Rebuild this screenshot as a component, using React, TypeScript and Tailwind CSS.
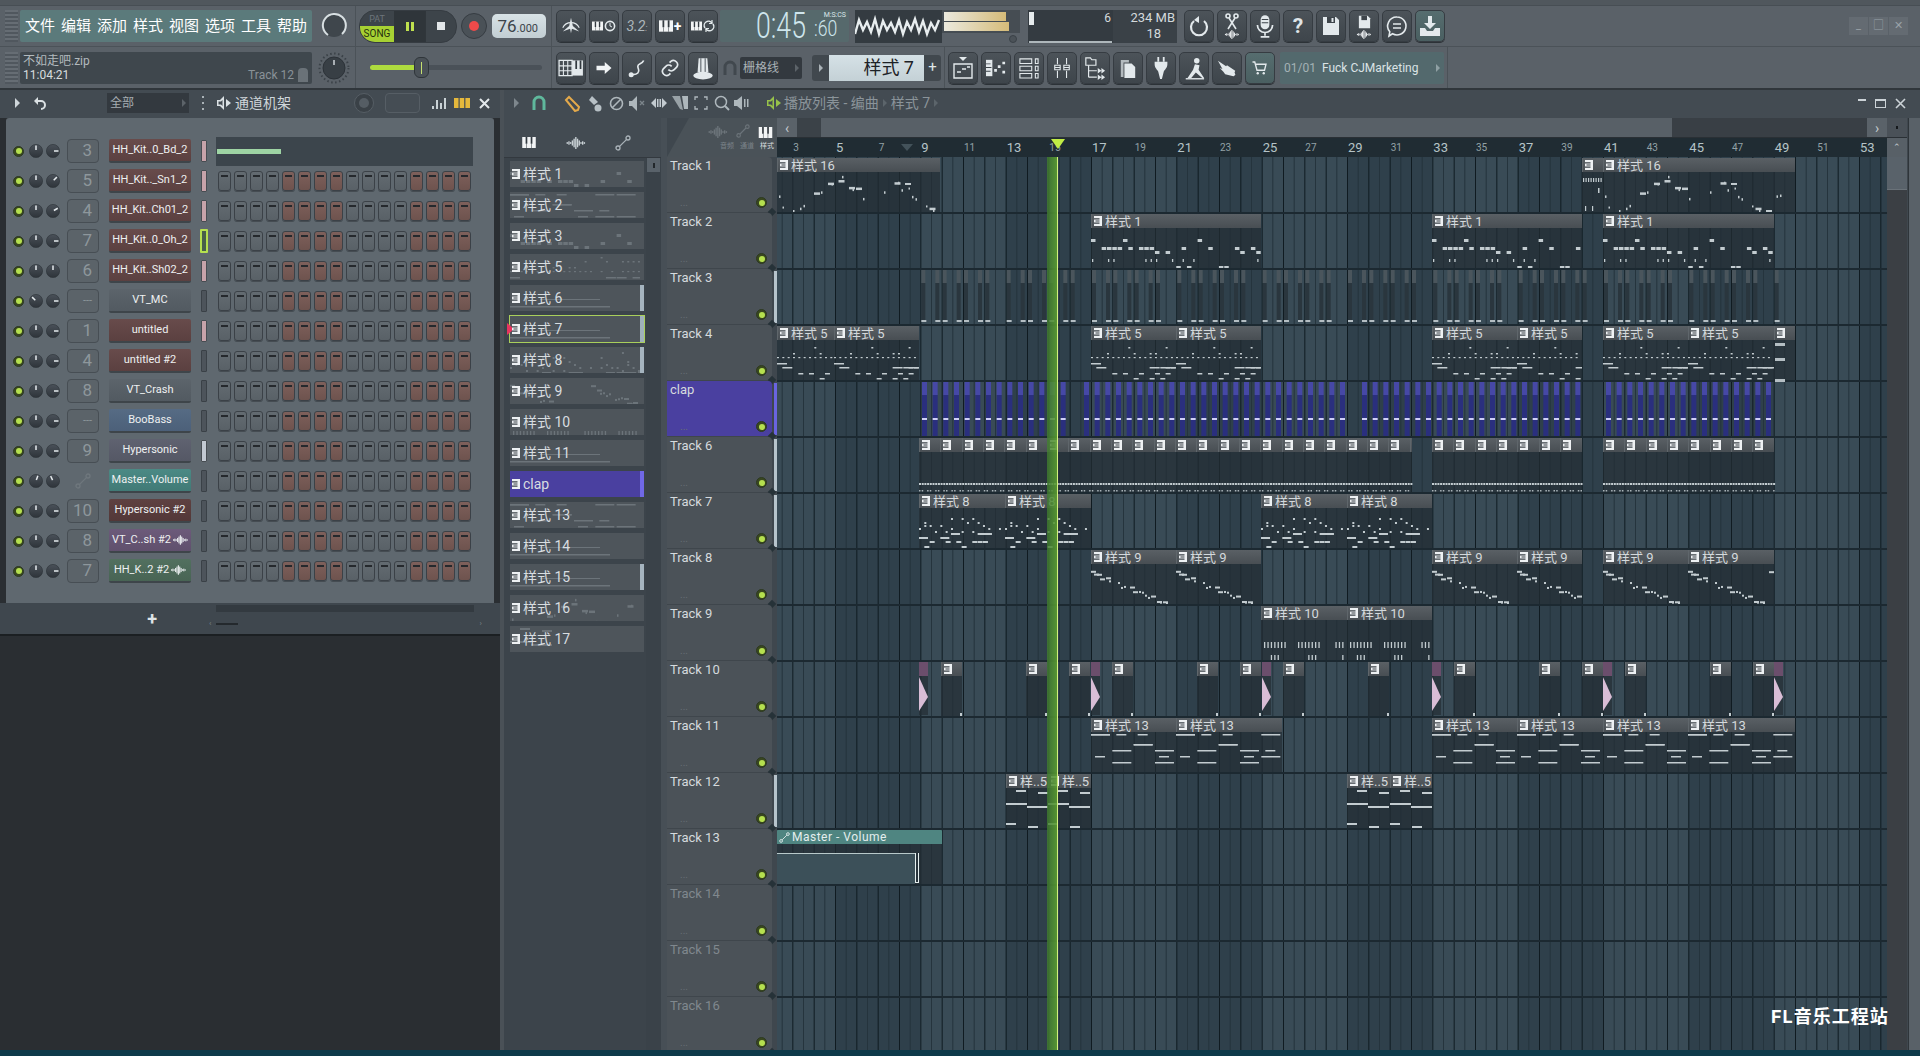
import React from "react";

const BAR = 64 / 3;
const ROW = 56;
const cx = (px: number) => px - 778;
const barX = (b: number) => 1092 + (b - 17) * BAR;

const rng = (seed: number) => {
  let s = seed;
  return () => (s = (s * 9301 + 49297) % 233280) / 233280;
};

type Note = [number, number, number, number];
type Kind = "p16" | "p1" | "p5" | "p8" | "p9" | "p10" | "p13" | "p5b" | "none" | "tick" | "low";

const notesFor = (kind: Kind, w: number): Note[] => {
  const out: Note[] = [];
  const r = rng(kind.length * 37 + kind.charCodeAt(1) * 11);
  if (kind === "p1") {
    const rows = [11, 19, 19, 23, 23, 19, 38];
    for (let x = 0; x < w - 4; x += 5.33) {
      if (r() < 0.8) {
        const y = rows[Math.floor(r() * rows.length)];
        out.push([x, y, 4.5, 3]);
      }
      if (r() < 0.28) out.push([x + 1, 31, 1.3, 3]);
      if (r() < 0.05) out.push([x, 4, 5, 3]);
    }
  } else if (kind === "p5") {
    for (let x = 0; x < w - 2; x += 5.33) {
      if (r() < 0.8) out.push([x, 17, 2, 1.2]);
      if (r() < 0.5) out.push([x, [3, 7, 13][Math.floor(r() * 3)], 2, 1.5]);
      if (r() < 0.55) out.push([x, [23, 27][Math.floor(r() * 2)], 10, 1.5]);
      if (r() < 0.45) out.push([x, [33, 38][Math.floor(r() * 2)], 5, 1.5]);
    }
  } else if (kind === "p8") {
    for (let x = 0; x < w - 2; x += 5.33) {
      if (r() < 0.45) out.push([x, [5, 10, 14][Math.floor(r() * 3)], 2, 2]);
      if (r() < 0.8) out.push([x, 17 + Math.floor(r() * 3) * 3, 2, 2]);
      if (r() < 0.35) out.push([x, [25, 29][Math.floor(r() * 2)], 9, 2]);
      if (r() < 0.35) out.push([x, [33, 38][Math.floor(r() * 2)], 5, 2]);
    }
  } else if (kind === "p9") {
    for (let x = 0; x < w - 4; x += 3) {
      const y = 6 + ((x * 0.42) % 34) + r() * 5;
      if (r() < 0.75) out.push([x, y, r() < 0.5 ? 5 : 2, 2]);
    }
  } else if (kind === "p10") {
    for (let x = 3; x < w - 3; x += 3.4) {
      if (Math.floor(x / 12) % 3 !== 2) out.push([x, 22, 1.3, 6]);
      if (Math.floor(x / 9) % 4 === 1) out.push([x, 35, 1.3, 6]);
    }
  } else if (kind === "p13") {
    const rows = [2, 12, 18, 24, 30];
    for (let x = 0; x < w - 8; x += 21.33) {
      out.push([x, rows[Math.floor(r() * 5)], 19, 1.5]);
      out.push([x, rows[Math.floor(r() * 5)], 19, 1.5]);
      out.push([x + 4, rows[Math.floor(r() * 5)], 10, 1.5]);
    }
  } else if (kind === "p5b") {
    const seq: Note[] = [
      [10, 2, 10, 2],
      [0, 15, 21, 2],
      [32, 4, 10, 2],
      [21, 18, 21, 2],
      [0, 35, 10, 2],
      [22, 38, 10, 2],
    ];
    seq.forEach((n) => out.push(n));
  } else if (kind === "p16") {
    for (let x = 2; x < w - 6; x += 3.5) {
      const y = 20 + Math.sin(x / 11) * 12 + r() * 10 - (x > 60 && x < 100 ? 14 : 0);
      if (r() < 0.42) out.push([x, Math.min(38, y), r() < 0.25 ? 6 : 1.5, r() < 0.25 ? 2 : 2.5]);
    }
  } else if (kind === "tick") {
    for (let x = 1; x < w - 1; x += 2.5) out.push([x, 6, 1.2, 4]);
    out.push([16, 16, 1.5, 5], [3, 34, 1.2, 5], [10, 34, 1.2, 5]);
  } else if (kind === "low") {
    out.push([0, 21, 100, 1.5], [30, 14, 60, 1]);
  }
  return out;
};

const Notes = ({ kind, w, h, color = "#c3ccd0", opacity = 1 }: { kind: Kind; w: number; h: number; color?: string; opacity?: number }) => (
  <svg width={w} height={h} className="block" opacity={opacity}>
    {notesFor(kind, w).map((n, i) => (
      <rect key={i} x={n[0]} y={n[1]} width={n[2]} height={n[3]} fill={color} />
    ))}
  </svg>
);

const PatIcon = ({ color = "#eef1f3" }: { color?: string }) => (
  <svg width="8" height="10" viewBox="0 0 8 10" className="shrink-0">
    <path d="M0 0h8v10H0z" fill={color} />
    <path d="M0 2.2h5.5v1.2H0zM1.5 4.4h4v1.2h-4zM0 6.6h5.5v1.2H0z" fill="#3b4248" />
  </svg>
);

const Wave = ({ w = 22, h = 14, c = "#eef1f3" }: { w?: number; h?: number; c?: string }) => (
  <svg width={w} height={h} viewBox="0 0 22 14">
    {[1, 2, 1, 3, 5, 7, 5, 3, 1, 2, 1].map((v, i) => (
      <rect key={i} x={i * 2} y={7 - v} width="1.6" height={v * 2} fill={c} />
    ))}
  </svg>
);

const Auto = ({ s = 16, c = "#aab3b9" }: { s?: number; c?: string }) => (
  <svg width={s} height={s} viewBox="0 0 16 16" fill="none" stroke={c} strokeWidth="1.3">
    <circle cx="3" cy="13" r="2" />
    <circle cx="13" cy="3" r="2" />
    <path d="M4.6 11.4 11.4 4.6" />
  </svg>
);

const PianoGlyph = ({ w = 16, h = 13 }: { w?: number; h?: number }) => (
  <svg width={w} height={h} viewBox="0 0 16 13">
    <path d="M0 0h16v13H0z" fill="#f2f4f5" />
    <path d="M4 0h2v8H4zM10 0h2v8h-2z" fill="#333a40" />
    <path d="M5 8h.6v5H5zM10.6 8h.6v5h-.6z" fill="#333a40" />
  </svg>
);

const Knob = ({ a, s = 14, rim = "#2c3238" }: { a: number; s?: number; rim?: string }) => (
  <svg width={s} height={s} viewBox="0 0 14 14" className="shrink-0">
    <defs>
      <linearGradient id="kn" x1="0" y1="0" x2="0" y2="1">
        <stop offset="0" stopColor="#4a5159" />
        <stop offset="1" stopColor="#2e343a" />
      </linearGradient>
    </defs>
    <circle cx="7" cy="7" r="6.6" fill="url(#kn)" stroke={rim} strokeWidth=".6" />
    <path d="M7 1.5V6" stroke="#e6ebee" strokeWidth="1.5" transform={`rotate(${a} 7 7)`} />
  </svg>
);

const Led = ({ s = 11 }: { s?: number }) => (
  <span className="flex shrink-0 items-center justify-center rounded-full border border-[#2d3a22] bg-[#39471f]" style={{ width: s, height: s }}>
    <span className="h-[6px] w-[6px] rounded-full bg-[#b5e04f]" />
  </span>
);

const Tool = ({ children, teal }: { children?: React.ReactNode; teal?: boolean }) => (
  <div
    className={`flex h-[32px] w-[30px] shrink-0 items-center justify-center rounded-[5px] border border-[#363c42] shadow-[0_1px_0_#2c3237] ${
      teal ? "bg-linear-to-b from-[#566d6f] to-[#4a5f61]" : "bg-linear-to-b from-[#4c5359] to-[#3e454b]"
    }`}
  >
    {children}
  </div>
);

const Ico = ({ children, s = 22 }: { children: React.ReactNode; s?: number }) => (
  <svg width={s} height={s} viewBox="0 0 24 24" fill="none" stroke="#e3e9ec" strokeWidth="2">
    {children}
  </svg>
);

const W = "#e3e9ec";

const topIcons: React.ReactNode[] = [
  <Ico key="a">
    <path d="M12 3 14 12 21 18 13 15 12 20 11 15 3 18 10 12Z" fill={W} stroke="none" />
    <path d="M3 14a10 10 0 0 1 18 0" strokeWidth="1.2" />
  </Ico>,
  <div key="b" className="flex items-center gap-[1px]">
    <PianoGlyph w={11} h={12} />
    <svg width="12" height="12" viewBox="0 0 12 12" fill="none" stroke={W} strokeWidth="1.6">
      <circle cx="6" cy="6" r="4.6" />
      <path d="M6 3v3l2 1" strokeWidth="1" />
    </svg>
  </div>,
  <span key="c" className="text-[14px] italic text-[#aeb7bc]">3.2<span className="text-[9px]">:</span></span>,
  <div key="d" className="flex items-center gap-[1px]">
    <PianoGlyph w={14} h={12} />
    <span className="text-[14px] font-bold leading-none text-white">+</span>
  </div>,
  <div key="e" className="flex items-center gap-[1px]">
    <PianoGlyph w={11} h={10} />
    <svg width="12" height="14" viewBox="0 0 12 14" fill="none" stroke={W} strokeWidth="1.5">
      <path d="M2 9a4 4 0 0 1 7-5M10 5a4 4 0 0 1-7 5" />
      <path d="M9 1v3.5H6M3 13V9.5h3" strokeWidth="1.2" />
    </svg>
  </div>,
];

const rightIcons: React.ReactNode[] = [
  <Ico key="a" s={24}>
    <path d="M17 7a8 8 0 1 1-10 0" strokeWidth="2.2" />
    <path d="M12 2 7 6l5 3z" fill={W} stroke="none" />
  </Ico>,
  <div key="b" className="flex flex-col items-center">
    <svg width="18" height="17" viewBox="0 0 18 17" fill="none" stroke={W} strokeWidth="1.6">
      <circle cx="5" cy="3" r="2" />
      <circle cx="13" cy="3" r="2" />
      <path d="M6 5l7 11M12 5 5 16" />
    </svg>
    <Wave w={16} h={9} />
  </div>,
  <Ico key="c" s={26}>
    <rect x="8" y="2" width="8" height="13" rx="4" fill={W} stroke="none" />
    <path d="M5 11a7 7 0 0 0 14 0M12 18v3M8 22h8" strokeWidth="1.6" />
    <path d="M9 6h6M9 9h6" stroke="#3e454b" strokeWidth="1" />
  </Ico>,
  <span key="d" className="text-[21px] font-bold leading-none text-[#dfe5e8]">?</span>,
  <Ico key="e" s={24}>
    <path d="M4 3h13l3 3v15H4z" fill={W} stroke="none" />
    <path d="M8 3v6h8V3" fill="#3e454b" stroke="none" />
    <path d="M12.5 4h2v4h-2z" fill={W} stroke="none" />
  </Ico>,
  <div key="f" className="flex flex-col items-center">
    <svg width="15" height="16" viewBox="0 0 24 24">
      <path d="M3 2h14l4 4v16H3z" fill={W} />
      <path d="M7 2v7h9V2" fill="#3e454b" />
    </svg>
    <Wave w={16} h={9} />
  </div>,
  <Ico key="g" s={24}>
    <path d="M12 3a9 9 0 1 1-4.5 16.8L4 22l.8-4.2A9 9 0 0 1 12 3Z" strokeWidth="1.6" />
    <path d="M8 10h8M8 14h8" strokeWidth="1.6" />
  </Ico>,
  <Ico key="h" s={24}>
    <path d="M10 2h4v7h4l-6 6-6-6h4z" fill={W} stroke="none" />
    <path d="M2 14h5l2 3h6l2-3h5v8H2z" fill={W} stroke="none" />
  </Ico>,
];

const row2Icons: React.ReactNode[] = [
  <Ico key="a" s={26}>
    <path d="M1 5h12v14H1z" strokeWidth="1.2" />
    <path d="M1 10h12M1 14.5h12M5 5v14M9 5v14" strokeWidth="1" />
    <path d="M13 5h10v14H13z" fill={W} stroke="none" />
    <path d="M16 5h1.6v8H16zM20 5h1.6v8H20z" fill="#333a40" stroke="none" />
  </Ico>,
  <Ico key="b" s={18}>
    <path d="M2 9h11V4l9 8-9 8v-5H2z" fill="#f1f4f5" stroke="none" />
  </Ico>,
  <Ico key="c" s={20}>
    <path d="M20 3c-2 5-7 3-7 7s3 5 0 8-8 1-10 3" strokeWidth="2" />
    <circle cx="5" cy="20" r="3" fill={W} stroke="none" />
  </Ico>,
  <Ico key="d" s={20}>
    <path d="M10 14a5 5 0 0 0 7 0l3-3a5 5 0 0 0-7-7l-1.5 1.5" />
    <path d="M14 10a5 5 0 0 0-7 0l-3 3a5 5 0 0 0 7 7l1.5-1.5" />
  </Ico>,
  <Ico key="e" s={26}>
    <path d="M8 3h8l1 13H7z" fill={W} stroke="none" />
    <path d="M10 3v13M14 3v13" stroke="#5b6269" strokeWidth="1" />
    <ellipse cx="12" cy="19" rx="9" ry="3.5" fill={W} stroke="none" />
  </Ico>,
];

const row2Right: React.ReactNode[] = [
  <Ico key="a" s={24}>
    <path d="M8 1h8l-4 4z" fill={W} stroke="none" />
    <path d="M3 8h18v14H3z" strokeWidth="1.4" />
    <path d="M6 16h4M11 13h4M16 11h3" strokeWidth="1.6" />
  </Ico>,
  <svg key="b" width="22" height="20" viewBox="0 0 24 22" fill={W}>
    <path d="M1 2h7v18H1z" />
    <path d="M1 6h5v1H1zM1 10h6v1H1zM1 14h5v1H1z" fill="#3e454b" />
    <path d="M10 12h3v3h-3zM14 8h3v3h-3zM19 4h3v3h-3zM19 14h3v3h-3z" />
  </svg>,
  <svg key="c" width="20" height="22" viewBox="0 0 22 24" fill="none" stroke={W} strokeWidth="1.2">
    <path d="M1 2h13v5H1zM1 10h13v5H1zM1 18h13v5H1z" />
    <path d="M18 2h3v5h-3zM18 10h3v5h-3zM18 18h3v5h-3z" />
  </svg>,
  <svg key="d" width="20" height="22" viewBox="0 0 22 24" fill="none" stroke={W} strokeWidth="1.2">
    <path d="M6 1v7M6 15v8M16 1v7M16 15v8" />
    <path d="M3 9h6v5H3zM13 9h6v5h-6z" />
    <path d="M3 11.5h6M13 11.5h6" />
  </svg>,
  <svg key="e" width="22" height="24" viewBox="0 0 24 26" fill="none" stroke={W} strokeWidth="1.3">
    <path d="M2 2h5l1.500 2H13v6H2z" />
    <path d="M5 10v13M5 16h9M5 23h9" />
    <path d="M15 13l4 3-4 3zM15 20l4 3-4 3zM19 13l4 3-4 3zM19 20l4 3-4 3z" fill={W} stroke="none" />
  </svg>,
  <svg key="f" width="18" height="22" viewBox="0 0 20 24" fill={W}>
    <path d="M2 3h9v3H5v16H2z" opacity=".7" />
    <path d="M6 7h8l4 4v12H6z" />
  </svg>,
  <svg key="g" width="20" height="24" viewBox="0 0 22 26" fill={W}>
    <path d="M7 1h2v5H7zM13 1h2v5h-2z" />
    <path d="M4 6h14v3c0 4-3 6-4 8l-2 8h-2l-2-8c-1-2-4-4-4-8z" />
  </svg>,
  <svg key="h" width="22" height="24" viewBox="0 0 24 26" fill={W}>
    <circle cx="15" cy="5" r="3" />
    <path d="M13 9l-2 6-6 9h4l5-6 7 6h2l-6-9 1-5z" />
    <path d="M3 24h20v1.500H3z" />
  </svg>,
  <svg key="i" width="22" height="20" viewBox="0 0 24 22" fill={W}>
    <path d="M2 3l9 6 1-1 9 6-2 6-9-2-2-3-4-4 3 1z" />
    <circle cx="19" cy="18" r="2" />
  </svg>,
  <Ico key="j" s={18}>
    <path d="M2 4h3l3 11h10l2-8H6" strokeWidth="1.8" />
    <circle cx="9" cy="19" r="1.6" fill={W} stroke="none" />
    <circle cx="17" cy="19" r="1.6" fill={W} stroke="none" />
  </Ico>,
];

const Grip = () => (
  <div className="h-[32px] w-[13px] shrink-0 bg-[repeating-linear-gradient(0deg,#50575e_0,#50575e_2px,#666d74_2px,#666d74_4px)]" />
);

const wavePath = Array.from({ length: 22 }, (_, i) => `${i * 4},${i % 2 ? 9 + (i % 5) : 24 - (i % 3) * 2}`).join(" ");

const Toolbar = () => (
  <div className="h-[90px] shrink-0 border-b-2 border-[#30363b] bg-[#5a6168]">
    <div className="h-[6px] border-b border-[#474e54] bg-[#50575d]" />
    <div className="flex h-[41px] items-center border-b border-[#4b5258] pl-[5px]">
      <Grip />
      <div className="ml-[2px] flex h-[32px] w-[292px] items-center justify-between rounded-[2px] bg-[#5b7a7b] px-[5px] text-[15px] text-white">
        {["文件", "编辑", "添加", "样式", "视图", "选项", "工具", "帮助"].map((t) => (
          <span key={t}>{t}</span>
        ))}
      </div>
      <div className="flex w-[43px] justify-center">
        <svg width="28" height="28" viewBox="0 0 28 28" fill="none">
          <circle cx="14" cy="14" r="11" fill="#3f464c" />
          <path d="M8 23A11.500 11.500 0 1 1 22 22" stroke="#d8dfe2" strokeWidth="2" />
        </svg>
      </div>
      <div className="flex h-[41px] items-center border-l border-[#4b5258] pl-[3px]">
        <div className="flex h-[33px] w-[98px] overflow-hidden rounded-[16px] border border-[#363c42] bg-[#3d444a]">
          <div className="flex w-[34px] flex-col items-center justify-between">
            <span className="pt-[2px] text-[9px] leading-[12px] text-[#6d757b]">PAT</span>
            <span className="w-full bg-[#a7d133] py-[1px] text-center text-[10px] leading-[14px] text-[#24300f]">SONG</span>
          </div>
          <div className="flex w-[31px] items-center justify-center gap-[2px] bg-[#2f353a]">
            <span className="h-[9px] w-[3px] bg-[#bfe04e]" />
            <span className="h-[9px] w-[3px] bg-[#bfe04e]" />
          </div>
          <div className="flex flex-1 items-center justify-center border-l border-[#30363b]">
            <span className="h-[8px] w-[8px] bg-[#e3e7e9]" />
          </div>
        </div>
        <div className="ml-[4px] flex h-[26px] w-[26px] items-center justify-center rounded-full border border-[#363c42] bg-[#4a5157]">
          <span className="h-[10px] w-[10px] rounded-full bg-[#ee4a4a]" />
        </div>
        <div className="ml-[5px] flex h-[24px] w-[54px] items-baseline justify-end rounded-[5px] bg-linear-to-b from-[#d8e2e6] to-[#c2ced3] pr-[8px] pt-[2px] text-[#3c444a]">
          <span className="text-[17px] leading-[20px]">76</span>
          <span className="text-[11px]">.000</span>
        </div>
      </div>
      <div className="ml-[5px] flex h-[41px] items-center gap-[3px] border-l border-[#4b5258] pl-[4px]">
        {topIcons.map((ic, i) => (
          <Tool key={i}>{ic}</Tool>
        ))}
      </div>
      <div className="relative ml-[2px] flex h-[32px] w-[129px] items-end rounded-[2px] bg-[#56696c] pl-[36px] text-[#cfe6ec]">
        <span className="block w-[52px] origin-left scale-x-[0.74] whitespace-nowrap text-[36px] font-light leading-[32px]">0:45</span>
        <span className="ml-[6px] block w-[24px] origin-left scale-x-[0.8] whitespace-nowrap text-[22px] font-light leading-[26px]">:60</span>
        <span className="absolute right-[3px] top-[1px] text-[7px] leading-[8px] text-[#d9e6e8]">M:S:CS</span>
      </div>
      <div className="ml-[6px] h-[33px] w-[87px] overflow-hidden bg-[#343b41]">
        <svg width="87" height="33">
          <polyline points={wavePath} fill="none" stroke="#e8edef" strokeWidth="2.4" />
        </svg>
      </div>
      <div className="h-[33px] w-[78px]">
        <div className="h-[23px] bg-[#464d53] p-[2px]">
          <div className="h-[9px] w-[62px] bg-linear-to-r from-[#ebe9dd] to-[#d5bb78]" />
          <div className="mt-[1px] h-[9px] w-[65px] bg-linear-to-r from-[#ebe9dd] to-[#d5bb78]" />
        </div>
        <div className="flex justify-end pr-[3px] pt-[2px]">
          <span className="h-[8px] w-[8px] rounded-full border border-[#3a4147] bg-[#4b5258]" />
        </div>
      </div>
      <div className="ml-[8px] flex h-[33px] w-[149px] bg-[#3a4147] text-[#d3d9dc]">
        <div className="relative w-[85px] bg-[#343b41]">
          <div className="absolute left-[1px] top-[2px] h-[13px] w-[5px] bg-[#e6ebed]" />
          <span className="absolute right-[2px] top-0 text-[12px] leading-[17px]">6</span>
          <div className="absolute bottom-0 left-[1px] h-[2px] w-[83px] bg-[#aeb7bb]" />
        </div>
        <div className="flex flex-1 flex-col items-end pr-[2px] text-[13px] leading-[16px]">
          <span>234 MB</span>
          <span className="pr-[14px]">18</span>
        </div>
      </div>
      <div className="ml-[7px] flex h-[41px] items-center gap-[3px]">
        {rightIcons.map((ic, i) => (
          <Tool key={i} teal={i === 7}>
            {ic}
          </Tool>
        ))}
      </div>
      <div className="flex-1" />
      <div className="mr-[12px] flex h-[18px] gap-[1px]">
        {["_", "□", "✕"].map((t) => (
          <span key={t} className="flex w-[19px] items-center justify-center bg-[#646b72] text-[11px] text-[#9aa2a8]">
            {t}
          </span>
        ))}
      </div>
    </div>
    <div className="flex h-[41px] items-center pl-[5px]">
      <Grip />
      <div className="ml-[2px] h-[32px] w-[292px] rounded-[2px] bg-[#3f474d] px-[3px] text-[12px] leading-[14px] text-[#d7dcde]">
        <div className="pt-[2px] text-[#b3babe]">不如走吧.zip</div>
        <div className="flex items-center justify-between">
          <span>11:04:21</span>
          <span className="flex items-center gap-[4px] pr-[1px] text-[#8a9298]">
            Track 12
            <span className="h-[14px] w-[10px] rounded-t-[4px] bg-[#6a7278]" />
          </span>
        </div>
      </div>
      <div className="flex w-[43px] justify-center">
        <svg width="32" height="32" viewBox="0 0 32 32">
          <circle cx="16" cy="16" r="14.500" fill="none" stroke="#3b4248" strokeWidth="2" strokeDasharray="1.500 2.500" />
          <circle cx="16" cy="16" r="11" fill="#383f45" stroke="#2c3238" />
          <path d="M16 8v5" stroke="#cfd6da" strokeWidth="1.500" />
        </svg>
      </div>
      <div className="flex h-[41px] w-[196px] items-center border-l border-[#4b5258] pl-[14px]">
        <div className="relative h-[5px] w-[172px] rounded-full bg-[#4a5158]">
          <div className="h-[5px] w-[51px] rounded-l-full bg-[#aedb3f]" />
          <div className="absolute left-[44px] top-[-8px] flex h-[21px] w-[15px] items-center justify-center rounded-[6px] border border-[#2f353a] bg-[#4a5157]">
            <span className="h-[12px] w-[1px] bg-[#c5e070]" />
          </div>
        </div>
      </div>
      <div className="flex h-[41px] items-center gap-[3px] border-l border-[#4b5258] pl-[4px]">
        {row2Icons.map((ic, i) => (
          <Tool key={i}>{ic}</Tool>
        ))}
      </div>
      <svg width="14" height="16" viewBox="0 0 14 16" className="ml-[5px] shrink-0" fill="none" stroke="#41484e" strokeWidth="3">
        <path d="M2 15V7a5 5 0 0 1 10 0v8" />
      </svg>
      <div className="ml-[3px] flex h-[22px] w-[62px] items-center justify-between rounded-[2px] bg-[#33393f] px-[3px] text-[12px] text-[#a9b1b6]">
        栅格线
        <span className="h-0 w-0 border-y-[4px] border-l-[4px] border-y-transparent border-l-[#5c6369]" />
      </div>
      <div className="ml-[10px] flex h-[26px]">
        <div className="flex w-[17px] items-center justify-center rounded-l-[3px] bg-[#41484e]">
          <span className="h-0 w-0 border-y-[4px] border-l-[4px] border-y-transparent border-l-[#aab2b7]" />
        </div>
        <div className="flex w-[95px] items-center justify-end bg-linear-to-b from-[#d5e1e6] to-[#c4d1d6] pr-[10px] text-[18px] text-[#1d2226]">
          样式 7
        </div>
        <div className="flex w-[17px] items-center justify-center rounded-r-[3px] bg-[#41484e] text-[15px] text-[#dfe5e8]">+</div>
      </div>
      <div className="ml-[3px] flex h-[41px] items-center gap-[3px] border-l border-[#4b5258] pl-[3px]">
        {row2Right.map((ic, i) => (
          <Tool key={i} teal={i === 9}>
            {ic}
          </Tool>
        ))}
      </div>
      <div className="ml-[5px] flex h-[32px] w-[164px] items-center rounded-[2px] bg-[#53696d] px-[4px] text-[12px] text-[#dbe3e5]">
        <span className="text-[#a4b2b5]">01/01</span>
        <span className="ml-[6px] flex-1">Fuck CJMarketing</span>
        <span className="h-0 w-0 border-y-[4px] border-l-[4px] border-y-transparent border-l-[#8fa0a4]" />
      </div>
      <div className="ml-[3px] h-[41px] flex-1 border-l border-[#4b5258]" />
    </div>
  </div>
);

type Channel = { num?: string; name: string; color: string; sel: string; ctrl?: boolean; wave?: boolean; p: number; v: number };

const RED = "from-[#684b4b] to-[#5b4040]";
const GRAY = "from-[#5c646b] to-[#525a61]";
const channels: Channel[] = [
  { num: "3", name: "HH_Kit..0_Bd_2", color: RED, sel: "pink", p: 0, v: 90 },
  { num: "5", name: "HH_Kit.._Sn1_2", color: RED, sel: "pink", p: 0, v: 45 },
  { num: "4", name: "HH_Kit..Ch01_2", color: RED, sel: "pink", p: 0, v: 60 },
  { num: "7", name: "HH_Kit..0_Oh_2", color: RED, sel: "on", p: 0, v: 90 },
  { num: "6", name: "HH_Kit..Sh02_2", color: RED, sel: "pink", p: 0, v: 0 },
  { num: "---", name: "VT_MC", color: GRAY, sel: "off", p: -45, v: 90 },
  { num: "1", name: "untitled", color: RED, sel: "pink", p: 0, v: 90 },
  { num: "4", name: "untitled #2", color: RED, sel: "off", p: 0, v: 90 },
  { num: "8", name: "VT_Crash", color: GRAY, sel: "off", p: 0, v: 90 },
  { num: "---", name: "BooBass", color: "from-[#566b84] to-[#4c6079]", sel: "off", p: 0, v: 90 },
  { num: "9", name: "Hypersonic", color: "from-[#5f6270] to-[#555865]", sel: "light", p: 0, v: 90 },
  { name: "Master..Volume", color: "from-[#4b8a85] to-[#417a76]", sel: "off", ctrl: true, p: 20, v: -25 },
  { num: "10", name: "Hypersonic #2", color: "from-[#5e4141] to-[#533838]", sel: "off", p: 0, v: 90 },
  { num: "8", name: "VT_C..sh #2", color: "from-[#6c5a7a] to-[#60506d]", sel: "off", wave: true, p: 0, v: 90 },
  { num: "7", name: "HH_K..2 #2", color: "from-[#52705f] to-[#486454]", sel: "off", wave: true, p: 0, v: 90 },
];

const selClass: Record<string, string> = {
  pink: "bg-[#c7a3aa] border-[#474d52]",
  off: "bg-[#4d545b] border-[#3a4147]",
  on: "bg-[#48604a] border-[#b5e04f] border-2 w-[8px] h-[24px]",
  light: "bg-[#c2c9d2] border-[#474d52]",
};

const Step = ({ alt }: { alt: boolean }) => (
  <div
    className={`flex h-[20px] w-[13px] justify-center rounded-[3px] border border-[#3b4147] pt-[3px] shadow-[0_1px_0_#454c52] ${
      alt ? "bg-linear-to-b from-[#7e605b] to-[#6e534e]" : "bg-linear-to-b from-[#636b71] to-[#596167]"
    }`}
  >
    <span className="h-[2px] w-[7px] bg-[#25292d]" />
  </div>
);

const ChannelRow = ({ c, index }: { c: Channel; index: number }) => (
  <div className="flex h-[30px] items-center">
    <div className="ml-[13px] flex w-[11px] justify-center">
      <Led />
    </div>
    <div className="ml-[5px] flex w-[31px] items-center gap-[3px]">
      <Knob a={c.p} />
      <Knob a={c.v} />
    </div>
    <div className="ml-[7px] w-[32px]">
      {c.ctrl ? (
        <div className="flex justify-center">
          <Auto s={16} c="#6f777d" />
        </div>
      ) : (
        <div className="flex h-[24px] items-center justify-end rounded-[4px] border border-[#474e54] bg-[#5b6369] pr-[6px] text-[17px] text-[#8e979c]">
          <span className={c.num === "---" ? "text-[11px]" : ""}>{c.num}</span>
        </div>
      )}
    </div>
    <div
      className={`ml-[10px] flex h-[24px] w-[82px] items-center justify-center gap-[2px] rounded-[2px] border-b-2 border-[#3e454a] bg-linear-to-b ${c.color} whitespace-nowrap text-[11px] text-[#eef0f1]`}
    >
      <span>{c.name}</span>
      {c.wave && <Wave w={15} h={12} />}
    </div>
    <div className="ml-[9px] flex w-[8px] justify-center">
      <div className={`h-[22px] w-[6px] rounded-[1px] border ${selClass[c.sel]}`} />
    </div>
    {index === 0 ? (
      <div className="ml-[8px] flex h-[29px] w-[257px] items-center bg-[#3c454c] pl-[1px]">
        <div className="h-[5px] w-[64px] bg-[#9ed4a4]" />
      </div>
    ) : (
      <div className="ml-[10px] flex gap-[3px]">
        {Array.from({ length: 16 }, (_, i) => (
          <Step key={i} alt={Math.floor(i / 4) % 2 === 1} />
        ))}
      </div>
    )}
  </div>
);

const ChannelRack = () => (
  <div className="flex h-full w-[500px] shrink-0 flex-col bg-[#2a2e32]">
    <div className="flex h-[28px] shrink-0 items-center bg-[#434b52] pb-[2px] text-[#dde3e6]">
      <span className="ml-[15px] h-0 w-0 border-y-[5px] border-l-[5px] border-y-transparent border-l-[#cfd6da]" />
      <svg width="14" height="14" viewBox="0 0 14 14" className="ml-[13px]" fill="none" stroke="#dbe1e4" strokeWidth="2">
        <path d="M4 5h4a4 4 0 0 1 0 8" />
        <path d="M1 5l4-4v8z" fill="#dbe1e4" stroke="none" />
      </svg>
      <div className="ml-[60px] flex h-[20px] w-[82px] items-center justify-between bg-[#33393f] px-[3px] text-[12px] text-[#a5adb2]">
        全部
        <span className="h-0 w-0 border-y-[4px] border-l-[4px] border-y-transparent border-l-[#5c6369]" />
      </div>
      <div className="ml-[13px] flex h-[14px] w-[2px] flex-col justify-between">
        <span className="h-[2px] w-[2px] bg-[#aab2b7]" />
        <span className="h-[2px] w-[2px] bg-[#aab2b7]" />
        <span className="h-[2px] w-[2px] bg-[#aab2b7]" />
      </div>
      <svg width="16" height="16" viewBox="0 0 16 16" className="ml-[12px]" fill="#dbe1e4">
        <path d="M1 5h3l4-4v14l-4-4H1zM2.500 6.500v3H5l1.500 1.500v-6L5 6.500z" fillRule="evenodd" />
        <path d="M10 4l5 4-5 4z" />
      </svg>
      <span className="ml-[3px] text-[14px] text-[#cfd6da]">通道机架</span>
      <div className="ml-[63px] flex h-[20px] w-[20px] items-center justify-center rounded-full border border-[#565e65] bg-[#3a4147]">
        <span className="h-[10px] w-[10px] rounded-full bg-[#555d64]" />
      </div>
      <div className="ml-[11px] h-[20px] w-[35px] rounded-[4px] border border-[#565e65] bg-[#454d54]" />
      <svg width="16" height="12" viewBox="0 0 16 12" className="ml-[11px]" fill="#c9d1d5">
        <path d="M1 9h2v3H1zM5 3h2v9H5zM9 6h2v6H9zM13 1h2v11h-2z" />
      </svg>
      <svg width="16" height="10" viewBox="0 0 16 10" className="ml-[7px]" fill="#e5b83c">
        <path d="M0 0h4.500v10H0zM5.700 0h4.500v10H5.700zM11.400 0H16v10h-4.600z" />
      </svg>
      <svg width="11" height="11" viewBox="0 0 11 11" className="ml-[9px]" stroke="#e3e8eb" strokeWidth="2">
        <path d="M1 1l9 9M10 1l-9 9" />
      </svg>
    </div>
    <div className="mx-[6px] h-[485px] shrink-0 rounded-t-[3px] bg-[#5f686f] pt-[18px]">
      <div className="-ml-[6px]">
        {channels.map((c, i) => (
          <ChannelRow key={i} c={c} index={i} />
        ))}
      </div>
    </div>
    <div className="flex h-[31px] shrink-0 bg-[#3f474e]">
      <div className="flex w-[216px] items-center justify-end pr-[59px] text-[18px] font-bold text-[#dfe4e6]">+</div>
      <div className="w-[258px] pt-[2px]">
        <div className="h-[7px] bg-[#333a40]" />
        <div className="flex items-center justify-between pt-[8px]">
          <span className="-ml-[7px] text-[8px] leading-[8px] text-[#7a8288]">‹</span>
          <span className="absolute ml-[0px] h-[2px] w-[22px] bg-[#24292d]" />
          <span className="mr-[-8px] text-[8px] leading-[8px] text-[#7a8288]">›</span>
        </div>
      </div>
    </div>
    <div className="h-[2px] shrink-0 bg-[#1b1f22]" />
    <div className="flex-1 bg-[#2a2e32]" />
  </div>
);

const patterns: { name: string; kind: Kind; bar?: string; sel?: boolean; clap?: boolean }[] = [
  { name: "样式 1", kind: "p1" },
  { name: "样式 2", kind: "p13" },
  { name: "样式 3", kind: "p1" },
  { name: "样式 5", kind: "p5" },
  { name: "样式 6", kind: "low", bar: "#a5b4bf" },
  { name: "样式 7", kind: "low", bar: "#9fb0bb", sel: true },
  { name: "样式 8", kind: "p8", bar: "#a5b4bf" },
  { name: "样式 9", kind: "p9" },
  { name: "样式 10", kind: "p10" },
  { name: "样式 11", kind: "low" },
  { name: "clap", kind: "none", bar: "#7068e6", clap: true },
  { name: "样式 13", kind: "p13" },
  { name: "样式 14", kind: "low" },
  { name: "样式 15", kind: "low", bar: "#a5b4bf" },
  { name: "样式 16", kind: "p16" },
  { name: "样式 17", kind: "p5b" },
];

const Picker = () => (
  <div className="flex w-[157px] shrink-0 flex-col bg-[#434b52]">
    <div className="flex h-[39px] shrink-0 items-center justify-around pl-[2px] pr-[16px] pt-[10px]">
      <PianoGlyph w={16} h={11} />
      <Wave w={20} h={12} c="#c9d1d5" />
      <Auto s={16} />
    </div>
    <div className="flex min-h-0 flex-1 border-t border-[#33393f]">
      <div className="w-[142px] bg-[#3c444b] pl-[6px] pt-[3px]">
        {patterns.map((p) => (
          <div
            key={p.name}
            className={`relative mb-[5px] flex h-[26px] w-[134px] items-center ${p.clap ? "bg-[#4a40a0]" : "bg-[#4e555b]"} ${
              p.sel ? "outline-1 outline-[#a9cf5b]" : ""
            }`}
          >
            <div className="absolute left-0 top-0">
              <Notes kind={p.kind} w={130} h={26} color="#808a90" opacity={0.6} />
            </div>
            {p.sel && <span className="absolute left-[-3px] top-[7px] h-0 w-0 border-y-[6px] border-l-[7px] border-y-transparent border-l-[#e8345f]" />}
            <div className="relative flex flex-1 items-center gap-[3px] pl-[2px] text-[14px] leading-none text-[#d8dde0]">
              <PatIcon />
              {p.name}
            </div>
            {p.bar && <span className="h-full w-[4px]" style={{ backgroundColor: p.bar }} />}
          </div>
        ))}
      </div>
      <div className="w-[15px] bg-[#3a4249] pl-[1px]">
        <div className="flex h-[14px] w-[13px] items-center justify-center bg-[#59626a]">
          <span className="h-[5px] w-[2px] bg-[#22272b]" />
        </div>
      </div>
    </div>
  </div>
);

const tracks = [1, 2, 3, 4, 5, 6, 7, 8, 9, 10, 11, 12, 13, 14, 15, 16];
const selected = [3, 6, 7, 12];

const TrackHead = ({ n }: { n: number }) => {
  const clap = n === 5;
  return (
    <div className="flex h-[56px] shrink-0">
      <div className={`relative flex w-[105px] flex-col justify-between rounded-r-[4px] border-b border-[#3f464c] pb-[4px] pl-[3px] pr-[5px] pt-[1px] ${clap ? "bg-[#4a40a0]" : "bg-[#4b5258]"}`}>
        <span className={`text-[13px] leading-[16px] ${n > 13 ? "text-[#80888e]" : "text-[#d5dadd]"}`}>{clap ? "clap" : `Track ${n}`}</span>
        <div className="flex items-center justify-between">
          <span className="pl-[10px] text-[10px] leading-[8px] text-[#666e74]">...</span>
          <Led />
        </div>
        <span className="absolute -bottom-[3px] -right-[3px] h-[6px] w-[6px] rotate-45 bg-[#263238]" />
      </div>
      <div className="ml-[2px] w-[3px] py-[2px]">
        {(selected.includes(n) || clap) && <div className={`h-full ${clap ? "bg-[#6a64e0]" : "bg-[#b7c4cc]"}`} />}
      </div>
    </div>
  );
};

const Grid = () => {
  const bands: React.ReactNode[] = [];
  const lines: React.ReactNode[] = [];
  for (let b = 1; b < 58; b += 4) {
    if ((b - 1) % 8 === 4) bands.push(<rect key={b} x={cx(barX(b))} y={0} width={BAR * 4} height={893} fill="#2f404b" />);
  }
  for (let b = 1; b < 58; b += 1) {
    const x = cx(barX(b));
    lines.push(<rect key={`b${b}`} x={x} y={0} width={1} height={893} fill="#101b21" />);
    lines.push(<rect key={`h${b}`} x={x + BAR / 2} y={0} width={1} height={893} fill="#25343d" />);
  }
  return (
    <svg width="1110" height="893" className="absolute left-0 top-0">
      <rect width="1110" height="893" fill="#394b56" />
      {bands}
      {lines}
      {tracks.map((t) => (
        <rect key={t} x="0" y={t * ROW - 1} width="1110" height="2" fill="#1c2931" />
      ))}
    </svg>
  );
};

type ClipT = { x: number; w: number; t: number; label?: string; kind: Kind };
const mk = (t: number, label: string | undefined, kind: Kind, xs: number[]): ClipT[] =>
  xs.slice(0, -1).map((x, i) => ({ x, w: xs[i + 1] - x, t, label, kind }));

const beats = (from: number, to: number) => {
  const a: number[] = [];
  for (let x = from; x < to - 2; x += BAR) a.push(x);
  a.push(to);
  return a;
};

const clips: ClipT[] = [
  ...mk(1, "样式 16", "p16", [778, 941]),
  ...mk(1, undefined, "tick", [1583, 1604]),
  ...mk(1, "样式 16", "p16", [1604, 1796]),
  ...mk(2, "样式 1", "p1", [1092, 1262]),
  ...mk(2, "样式 1", "p1", [1433, 1583]),
  ...mk(2, "样式 1", "p1", [1604, 1775]),
  ...mk(4, "样式 5", "p5", [778, 835, 920]),
  ...mk(4, "样式 5", "p5", [1092, 1177, 1262]),
  ...mk(4, "样式 5", "p5", [1433, 1518, 1583]),
  ...mk(4, "样式 5", "p5", [1604, 1689, 1775]),
  ...mk(4, undefined, "none", [1775, 1796]),
  ...mk(6, undefined, "none", beats(920, 1413)),
  ...mk(6, undefined, "none", beats(1433, 1583)),
  ...mk(6, undefined, "none", beats(1604, 1775)),
  ...mk(7, "样式 8", "p8", [920, 1006, 1092]),
  ...mk(7, "样式 8", "p8", [1262, 1348, 1433]),
  ...mk(8, "样式 9", "p9", [1092, 1177, 1262]),
  ...mk(8, "样式 9", "p9", [1433, 1518, 1583]),
  ...mk(8, "样式 9", "p9", [1604, 1689, 1775]),
  ...mk(9, "样式 10", "p10", [1262, 1348, 1433]),
  ...[942, 1027, 1070, 1113, 1198, 1241, 1284, 1369, 1455, 1540, 1583, 1626, 1711, 1754].map((x) => ({ x, w: 21, t: 10, kind: "none" as Kind })),
  ...mk(11, "样式 13", "p13", [1092, 1177, 1283]),
  ...mk(11, "样式 13", "p13", [1433, 1518, 1604, 1689, 1796]),
  ...mk(12, "样..5", "p5b", [1007, 1049, 1092]),
  ...mk(12, "样..5", "p5b", [1348, 1391, 1433]),
];

const Clip = ({ c }: { c: ClipT }) => (
  <div className="absolute overflow-hidden" style={{ left: cx(c.x), top: (c.t - 1) * ROW + 1, width: c.w, height: ROW - 2 }}>
    <div className="flex h-[14px] items-center gap-[3px] border-l border-[#5f666b] bg-linear-to-b from-[#5a6065] to-[#484e53] pl-[2px] text-[13px] leading-none text-[#d4d9dc]">
      <PatIcon />
      {c.label && <span className="whitespace-nowrap">{c.label}</span>}
    </div>
    <div className="h-[40px] bg-[#232e35]/70">
      <Notes kind={c.kind} w={c.w} h={40} />
    </div>
  </div>
);

const Hits = () => {
  const t3: React.ReactNode[] = [];
  for (let b = 9; b < 50; b += 1) {
    [1, 15].forEach((off, j) => {
      if (j === 1 && (b % 4 === 0 || b === 49)) return;
      const x = cx(barX(b)) + off;
      t3.push(
        <g key={`${b}-${j}`}>
          <rect x={x} y={ROW * 2 + 1} width="4" height="13" fill="#4a555c" />
          <rect x={x} y={ROW * 2 + 14} width="4" height="37" fill="#2a363e" />
          <rect x={x} y={ROW * 2 + 51} width="5" height="2" fill="#b4bec3" />
        </g>,
      );
    });
  }
  const clap: React.ReactNode[] = [];
  const ranges = [
    [923, 1073],
    [1085, 1348],
    [1363, 1583],
    [1607, 1775],
  ];
  ranges.forEach(([a, b]) => {
    for (let x = a; x < b - 3; x += BAR / 2) {
      clap.push(
        <g key={x}>
          <rect x={cx(x)} y={ROW * 4 + 1} width="5" height="13" fill="#4648a6" />
          <rect x={cx(x)} y={ROW * 4 + 14} width="5" height="41" fill="#2a2f7e" />
          <rect x={cx(x)} y={ROW * 4 + 37} width="5" height="2" fill="#cfcff8" />
        </g>,
      );
    }
  });
  const t6: React.ReactNode[] = [];
  [
    [920, 1413],
    [1433, 1583],
    [1604, 1775],
  ].forEach(([a, b]) => {
    for (let x = a; x < b; x += 2.7) {
      t6.push(<rect key={`l${x}`} x={cx(x)} y={ROW * 5 + 46} width="2" height="2" fill="#c3ccd0" />);
      if (Math.floor((x - a) / 2.7) % 3 !== 2) t6.push(<rect key={`m${x}`} x={cx(x)} y={ROW * 5 + 53} width="1.500" height="1.500" fill="#a9b3b8" />);
    }
  });
  const pink = [920, 1092, 1263, 1433, 1604, 1775].map((x) => (
    <g key={x}>
      <rect x={cx(x)} y={ROW * 9 + 1} width="9" height="14" fill="#6b4e6c" />
      <rect x={cx(x)} y={ROW * 9 + 15} width="9" height="39" fill="#232e35" opacity=".7" />
      <path d={`M${cx(x)} ${ROW * 9 + 16}L${cx(x) + 9} ${ROW * 9 + 36}L${cx(x)} ${ROW * 9 + 50}Z`} fill="#d9bdd6" />
    </g>
  ));
  const ends = [961, 1046, 1089, 1132, 1217, 1260, 1303, 1388, 1474, 1559, 1602, 1645, 1730, 1773].map((x) => (
    <rect key={x} x={cx(x)} y={ROW * 9 + 52} width="2" height="3" fill="#c3ccd0" />
  ));
  const t4extra = [
    [3, 10],
    [18, 10],
    [39, 10],
  ].map(([y, w]) => <rect key={y} x={cx(1776)} y={ROW * 3 + 15 + y} width={w} height="3" fill="#b4bec3" />);
  return (
    <svg width="1110" height="893" className="absolute left-0 top-0">
      {t3}
      {clap}
      {t6}
      {pink}
      {ends}
      {t4extra}
    </svg>
  );
};

const Automation = () => (
  <div className="absolute" style={{ left: 0, top: 12 * ROW + 1, width: 165, height: ROW - 2 }}>
    <div className="flex h-[14px] items-center gap-[2px] rounded-t-[1px] bg-[#4f8581] pl-[2px] text-[12px] leading-none tracking-[0.5px] text-[#e4eeee]">
      <Auto s={11} c="#e4eeee" />
      Master - Volume
    </div>
    <div className="flex h-[40px] bg-[#232e35]/70">
      <div className="mt-[9px] h-[31px] w-[138px] border-t border-[#b8c9ca] bg-[#3c5059]" />
      <div className="mt-[9px] h-[30px] w-[4px] border-x border-b border-[#e4eeee]" />
    </div>
  </div>
);

const Arrangement = () => (
  <div className="flex min-w-0 flex-1 flex-col bg-[#3f474e]">
    <div className="flex h-[39px] shrink-0">
      <div className="w-[110px] bg-[#4a5258] pr-[3px] [clip-path:polygon(22px_0,100%_0,100%_100%,0_100%)]">
        <div className="flex h-[21px] items-end justify-end gap-[8px] pr-[1px] pb-[1px]">
          <Wave w={20} h={12} c="#6c747a" />
          <Auto s={14} c="#6c747a" />
          <PianoGlyph w={15} h={11} />
        </div>
        <div className="flex justify-end gap-[6px] pt-[2px] text-[7px] leading-[10px] text-[#7b8389]">
          <span>音频</span>
          <span>通道</span>
          <span className="text-[#d7dcdf]">样式</span>
        </div>
      </div>
      <div className="flex w-[1130px] flex-col">
        <div className="flex h-[20px] shrink-0 border-b border-[#2a3035] bg-[#2e3439]">
          <div className="flex w-[20px] items-center justify-center bg-[#5a6269] text-[14px] leading-none text-[#c3cbd0]">‹</div>
          <div className="w-[24px] bg-[#3b4248]" />
          <div className="w-[851px] bg-[#586067]" />
          <div className="w-[195px] bg-[#393f45]" />
          <div className="flex w-[20px] items-center justify-center bg-[#5a6269] text-[14px] leading-none text-[#c3cbd0]">›</div>
          <div className="flex w-[20px] items-center justify-center bg-[#4a5158]">
            <span className="h-[3px] w-[2px] bg-[#15191c]" />
          </div>
        </div>
        <div className="flex h-[19px]">
          <div className="relative w-[1110px] overflow-hidden bg-[#202c33] text-[#b6c4c8]">
            {Array.from({ length: 26 }, (_, i) => 3 + i * 2).map((b) => (
              <span
                key={b}
                className={`absolute top-0 leading-[19px] ${(b - 1) % 4 === 0 ? "text-[13px]" : "text-[10px] text-[#93a2a7]"}`}
                style={{ left: cx(barX(b)) + 1 }}
              >
                {b}
              </span>
            ))}
            <span className="absolute left-[124px] top-[6px] h-0 w-0 border-x-[6px] border-t-[7px] border-x-transparent border-t-[#43525a]" />
            <span className="absolute left-[274px] top-[1px] h-0 w-0 border-x-[7px] border-t-[10px] border-x-transparent border-t-[#c1ec45]" />
          </div>
          <div className="flex w-[20px] items-center justify-center bg-[#586067] text-[9px] text-[#c3cbd0]">⌃</div>
        </div>
      </div>
    </div>
    <div className="relative flex min-h-0 flex-1 overflow-hidden">
      <div className="w-[110px] shrink-0">
        {tracks.map((n) => (
          <TrackHead key={n} n={n} />
        ))}
      </div>
      <div className="relative h-[893px] w-[1110px] shrink-0 overflow-hidden">
        <Grid />
        {clips.map((c, i) => (
          <Clip key={i} c={c} />
        ))}
        <Hits />
        <Automation />
        <div className="absolute bottom-0 left-[270px] top-0 flex w-[11px]">
          <div className="flex-1 bg-linear-to-r from-[#3f7a2f]/80 to-[#5a9e30]/90" />
          <div className="w-[1px] bg-[#d4f080]" />
        </div>
      </div>
      <div className="w-[20px] shrink-0 bg-[#3b3f44]">
        <div className="h-[33px] border-b border-[#6a7279] bg-[#59626a]" />
      </div>
      <span className="absolute bottom-[24px] left-[1104px] whitespace-nowrap font-['Inter','Noto_Sans_CJK_SC',sans-serif] text-[18px] font-bold leading-none tracking-[1px] text-white">
        FL音乐工程站
      </span>
    </div>
  </div>
);

const Playlist = () => (
  <div className="flex h-full min-w-0 flex-1 flex-col border-l-4 border-[#4a5157] bg-[#434b52]">
    <div className="flex h-[28px] shrink-0 items-center pb-[2px]">
      <span className="ml-[10px] h-0 w-0 border-y-[5px] border-l-[5px] border-y-transparent border-l-[#7e878d]" />
      <svg width="16" height="16" viewBox="0 0 16 16" className="ml-[12px]" fill="none" stroke="#5fb89c" strokeWidth="3">
        <path d="M3 15V7a5 5 0 0 1 10 0v8" />
      </svg>
      <svg width="17" height="17" viewBox="0 0 17 17" className="ml-[17px]" fill="none" stroke="#e3a94b" strokeWidth="2">
        <path d="M2 5l3-3 10 10-1 3-3 1z" />
      </svg>
      <svg width="17" height="17" viewBox="0 0 17 17" className="ml-[5px]" fill="#b7c0c5">
        <path d="M6 1l6 6-4 3-5-5z" />
        <circle cx="12" cy="13" r="3.500" />
      </svg>
      <svg width="15" height="15" viewBox="0 0 15 15" className="ml-[6px]" fill="none" stroke="#aeb7bc" strokeWidth="1.600">
        <circle cx="7.500" cy="7.500" r="6" />
        <path d="M3 12l9-9" />
      </svg>
      <svg width="17" height="15" viewBox="0 0 17 15" className="ml-[5px]" fill="#aeb7bc">
        <path d="M0 5h3l5-5v15l-5-5H0z" />
        <path d="M11 5l4 4M15 5l-4 4" stroke="#7c858b" strokeWidth="1.300" />
      </svg>
      <svg width="16" height="12" viewBox="0 0 16 12" className="ml-[5px]" fill="#c3cbd0">
        <path d="M0 6l5-5v10zM16 6l-5-5v10z" />
        <path d="M6 2h1.500v8H6zM8.500 2H10v8H8.500z" />
      </svg>
      <svg width="17" height="16" viewBox="0 0 17 16" className="ml-[5px]" fill="#aeb7bc">
        <path d="M0 1h8l3 14-3-1z" opacity=".8" />
        <path d="M10 1h6v13h-4z" />
      </svg>
      <svg width="14" height="14" viewBox="0 0 14 14" className="ml-[5px]" fill="none" stroke="#aeb7bc" strokeWidth="1.300">
        <path d="M1 4V1h3M10 1h3v3M13 10v3h-3M4 13H1v-3" />
      </svg>
      <svg width="16" height="16" viewBox="0 0 16 16" className="ml-[6px]" fill="none" stroke="#aeb7bc" strokeWidth="1.500">
        <circle cx="7" cy="7" r="5.500" />
        <path d="M11 11l4 4" strokeWidth="2" />
      </svg>
      <svg width="16" height="14" viewBox="0 0 16 14" className="ml-[4px]" fill="#aeb7bc">
        <path d="M0 4h3l5-4v14l-5-4H0zM10 3h1.500v8H10zM13 3h1.500v8H13z" />
      </svg>
      <svg width="16" height="16" viewBox="0 0 16 16" className="ml-[16px]" fill="#97c24a">
        <path d="M1 5h3l4-4v14l-4-4H1zM2.500 6.500v3H5l1.500 1.500v-6L5 6.500z" fillRule="evenodd" />
        <path d="M10 4l5 4-5 4z" />
      </svg>
      <span className="ml-[2px] flex items-center gap-[4px] text-[14px] text-[#8b949a]">
        播放列表 - 编曲
        <span className="h-0 w-0 border-y-[4px] border-l-[4px] border-y-transparent border-l-[#5c656b]" />
        样式 7
        <span className="h-0 w-0 border-y-[4px] border-l-[4px] border-y-transparent border-l-[#5c656b]" />
      </span>
      <div className="flex-1" />
      <div className="mr-[14px] flex items-center gap-[9px] text-[#ccd3d7]">
        <span className="h-[2px] w-[8px] -translate-y-[3px] bg-[#ccd3d7]" />
        <span className="h-[9px] w-[11px] border border-t-2 border-[#ccd3d7]" />
        <svg width="11" height="11" viewBox="0 0 11 11" stroke="#ccd3d7" strokeWidth="1.600">
          <path d="M1 1l9 9M10 1l-9 9" />
        </svg>
      </div>
    </div>
    <div className="flex min-h-0 flex-1">
      <Picker />
      <div className="w-[6px] shrink-0 bg-[#474f56]" />
      <Arrangement />
      <div className="w-[12px] shrink-0 border-l border-[#2f353a] bg-[#596168]" />
    </div>
  </div>
);

const App = () => (
  <div className="flex h-[1056px] w-[1920px] flex-col overflow-hidden bg-[#0e3a4a] font-['Roboto','Noto_Sans_CJK_SC',sans-serif]">
    <Toolbar />
    <div className="flex h-[960px] shrink-0">
      <ChannelRack />
      <Playlist />
    </div>
    <div className="h-[6px] shrink-0 bg-[#0e3a4a]" />
  </div>
);

export default App;
